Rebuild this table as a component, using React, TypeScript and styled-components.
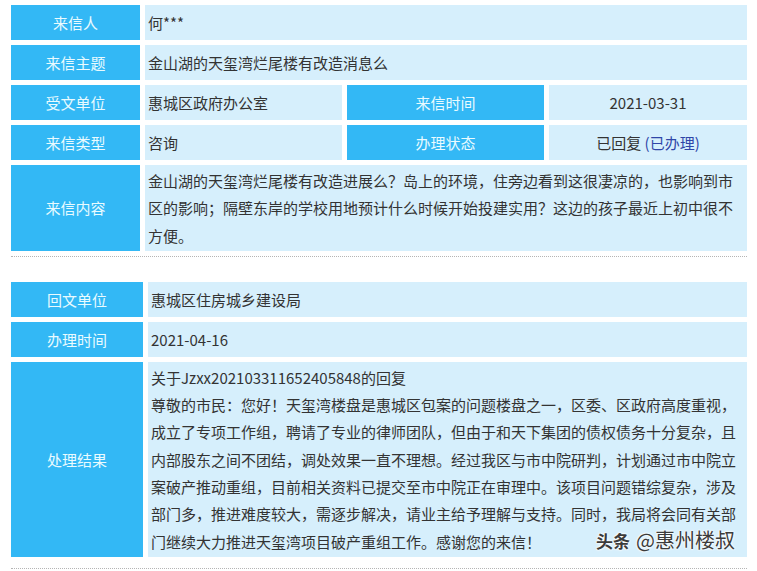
import React from "react";
import styled, { createGlobalStyle } from "styled-components";

const GlobalStyle = createGlobalStyle`
  html, body {
    margin: 0;
    padding: 0;
    background: #ffffff;
  }
  body {
    font-family: "Microsoft YaHei", "Noto Sans CJK SC", "Noto Sans", sans-serif;
    color: #333333;
  }
`;

const Page = styled.div`
  position: relative;
  width: 736px;
  padding: 5px 0 0 11px;
`;

const Table = styled.div<{ $cols: string }>`
  display: grid;
  grid-template-columns: ${(p) => p.$cols};
  gap: 5px;
  font-size: 15px;
`;

const Label = styled.div<{ $span?: number }>`
  grid-column: span ${(p) => p.$span ?? 1};
  min-height: 35px;
  background: #33b8f5;
  color: #e9fbff;
  display: flex;
  align-items: center;
  justify-content: center;
  line-height: 27.3px;
`;

const Value = styled.div<{ $span?: number; $center?: boolean }>`
  grid-column: span ${(p) => p.$span ?? 1};
  min-height: 35px;
  box-sizing: border-box;
  background: #d6effc;
  color: #333333;
  display: flex;
  align-items: center;
  justify-content: ${(p) => (p.$center ? "center" : "flex-start")};
  padding: 2px 3px;
  line-height: 27.3px;
`;

const Text = styled.div`
  width: 100%;
`;

const Status = styled.span`
  color: #2f46a8;
`;

const Divider = styled.div<{ $top: number; $bottom: number }>`
  margin-top: ${(p) => p.$top}px;
  margin-bottom: ${(p) => p.$bottom}px;
  border-top: 1px dotted #b5b5b5;
`;

const Watermark = styled.div`
  position: absolute;
  right: 12px;
  top: 527px;
  display: flex;
  align-items: baseline;
  gap: 6px;
  color: #3b3b3b;
  font-size: 20px;
  line-height: 26px;
  text-shadow: 0 0 2px #ffffff, 0 0 2px #ffffff, 0 0 3px #ffffff;
`;

const Brand = styled.span`
  font-size: 17px;
  font-weight: bold;
`;

export default function App() {
  return (
    <>
      <GlobalStyle />
      <Page>
        <Table $cols="129px 197px 197px 198px">
          <Label>来信人</Label>
          <Value $span={3}>何***</Value>

          <Label>来信主题</Label>
          <Value $span={3}>金山湖的天玺湾烂尾楼有改造消息么</Value>

          <Label>受文单位</Label>
          <Value>惠城区政府办公室</Value>
          <Label>来信时间</Label>
          <Value $center>2021-03-31</Value>

          <Label>来信类型</Label>
          <Value>咨询</Value>
          <Label>办理状态</Label>
          <Value $center>
            已回复&nbsp;<Status>(已办理)</Status>
          </Value>

          <Label>来信内容</Label>
          <Value $span={3}>
            <Text>
              金山湖的天玺湾烂尾楼有改造进展么？岛上的环境，住旁边看到这很凄凉的，也影响到市区的影响；隔壁东岸的学校用地预计什么时候开始投建实用？这边的孩子最近上初中很不方便。
            </Text>
          </Value>
        </Table>

        <Divider $top={5} $bottom={25} />

        <Table $cols="132px 1fr">
          <Label>回文单位</Label>
          <Value>惠城区住房城乡建设局</Value>

          <Label>办理时间</Label>
          <Value>2021-04-16</Value>

          <Label>处理结果</Label>
          <Value>
            <Text>
              关于Jzxx202103311652405848的回复
              <br />
              尊敬的市民：您好！天玺湾楼盘是惠城区包案的问题楼盘之一，区委、区政府高度重视，成立了专项工作组，聘请了专业的律师团队，但由于和天下集团的债权债务十分复杂，且内部股东之间不团结，调处效果一直不理想。经过我区与市中院研判，计划通过市中院立案破产推动重组，目前相关资料已提交至市中院正在审理中。该项目问题错综复杂，涉及部门多，推进难度较大，需逐步解决，请业主给予理解与支持。同时，我局将会同有关部门继续大力推进天玺湾项目破产重组工作。感谢您的来信！
            </Text>
          </Value>
        </Table>

        <Divider $top={11} $bottom={0} />

        <Watermark>
          <Brand>头条</Brand>
          <span>@惠州楼叔</span>
        </Watermark>
      </Page>
    </>
  );
}
